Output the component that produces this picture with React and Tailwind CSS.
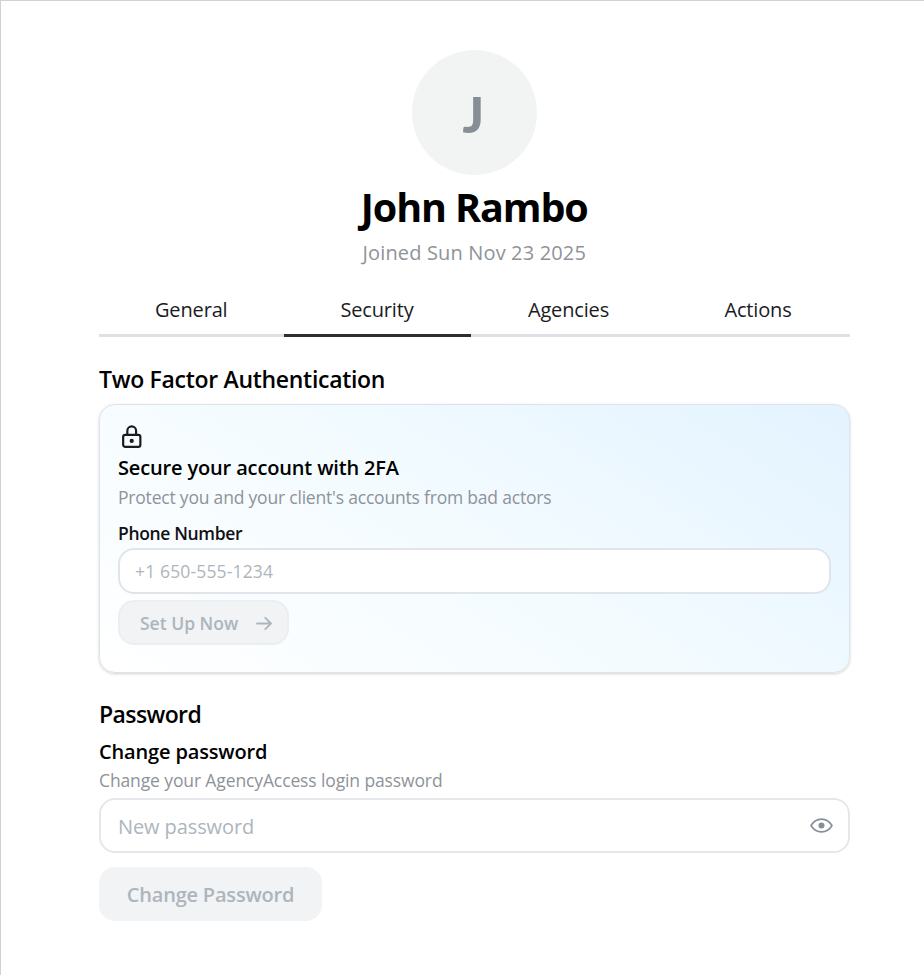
const tabs = ['General', 'Security', 'Agencies', 'Actions']

const LockIcon = () => (
  <svg className="ml-[1px] h-[25px] w-[25px]" viewBox="0 0 24 24" fill="none" stroke="currentColor" strokeWidth="2.1" strokeLinecap="round" strokeLinejoin="round">
    <rect x="4" y="10.5" width="16.5" height="11.5" rx="2" />
    <path d="M8 10.5V6.5a4.2 4.2 0 0 1 8.4 0v4" />
    <circle cx="12.2" cy="16.2" r="1" fill="currentColor" />
  </svg>
)

const ArrowIcon = () => (
  <svg className="h-[15px] w-[16px]" viewBox="0 0 16 15" fill="none" stroke="currentColor" strokeWidth="1.8" strokeLinecap="round" strokeLinejoin="round">
    <path d="M1 7.5h14M9.3 1.8L15 7.5l-5.7 5.7" />
  </svg>
)

const EyeIcon = () => (
  <svg className="h-[15px] w-[23px]" viewBox="0 0 23 15" fill="none">
    <path d="M1 7.5C3.5 3.3 7.2 1.1 11.5 1.1S19.5 3.3 22 7.5c-2.5 4.2-6.2 6.4-10.5 6.4S3.5 11.7 1 7.5z" stroke="#868e96" strokeWidth="1.6" strokeLinejoin="round" />
    <circle cx="11.5" cy="7.5" r="3" fill="#868e96" />
  </svg>
)

const ProfileHeader = () => (
  <div className="flex flex-col items-center whitespace-nowrap">
    <div className="flex h-[125px] w-[125px] items-center justify-center rounded-full bg-[#f2f4f4]">
      <span className="mt-[2px] mr-[2px] font-[Lato] text-[50px] leading-none font-black text-[#868e96]">J</span>
    </div>
    <h1 className="mt-[7px] text-[39.5px] leading-[50px] font-bold tracking-[-1.1px] text-black">John Rambo</h1>
    <p className="mt-[6px] text-[20px] leading-[30px] tracking-[0.15px] text-[#8e9399]">Joined Sun Nov 23 2025</p>
  </div>
)

const Tabs = () => (
  <div className="mt-[22px] grid grid-cols-[184.5px_187px_196px_183px] text-[20px] leading-[30px] tracking-[-0.15px]">
    {tabs.map((tab) => (
      <button
        key={tab}
        className={`h-[47px] border-b-[3px] pb-[5px] ${tab === 'Security' ? 'border-[#2e2e2e]' : 'border-[#dee0e6]'}`}
      >
        {tab}
      </button>
    ))}
  </div>
)

const TwoFactor = () => (
  <section className="mt-[27px]">
    <h2 className="text-[23px] leading-[30px] font-semibold tracking-[-0.3px] text-black">Two Factor Authentication</h2>
    <div className="mt-[10px] flex h-[269px] flex-col items-start rounded-[16px] border border-[#dfe4ea] bg-linear-[32deg] from-white via-[#f3fbff] to-[#e3f3ff] px-[18px] pt-[19px] shadow-[0_1px_3px_rgba(0,0,0,0.18)]">
      <LockIcon />
      <h3 className="mt-[4px] text-[20px] leading-[30px] font-semibold tracking-[-0.15px] text-black">Secure your account with 2FA</h3>
      <p className="text-[17.5px] leading-[28px] tracking-[-0.2px] text-[#8e9399]">Protect you and your client's accounts from bad actors</p>
      <label className="mt-[9px] text-[17.5px] leading-[26px] font-semibold tracking-[-0.35px] text-[#101113]">Phone Number</label>
      <input
        className="mt-[2px] h-[46px] w-full rounded-[16px] border-2 border-[#e1e4e9] bg-white px-[15px] text-[17.5px] tracking-[0.15px] placeholder:text-[#adb5bd]"
        placeholder="+1 650-555-1234"
      />
      <button className="mt-[6px] flex h-[45px] w-[171px] items-center rounded-[16px] border-2 border-[#eceef0] bg-[#f1f3f5] pt-[2px] pl-[20px] text-[17.5px] font-semibold text-[#adb5bd]">
        <span className="w-[116px] text-left">Set Up Now</span>
        <ArrowIcon />
      </button>
    </div>
  </section>
)

const Password = () => (
  <section className="mt-[26px]">
    <h2 className="text-[23px] leading-[30px] font-semibold tracking-[-0.6px] text-black">Password</h2>
    <h3 className="mt-[8px] text-[20px] leading-[30px] font-semibold tracking-[-0.15px] text-black">Change password</h3>
    <p className="text-[17.5px] leading-[27px] tracking-[-0.12px] text-[#8e9399]">Change your AgencyAccess login password</p>
    <div className="mt-[4px] flex h-[55px] items-center rounded-[16px] border-2 border-[#e5e7eb] bg-white pr-[15px] pl-[17px]">
      <input className="min-w-0 flex-1 pt-[2px] text-[20px] tracking-[-0.1px] placeholder:text-[#adb5bd]" placeholder="New password" />
      <EyeIcon />
    </div>
    <button className="mt-[14px] h-[54px] w-[223px] rounded-[16px] bg-[#f1f3f5] pt-[1px] text-[20px] font-semibold tracking-[-0.2px] text-[#adb5bd]">
      Change Password
    </button>
  </section>
)

export default function App() {
  return (
    <div className="h-[975px] overflow-hidden border-t border-l border-[#d2d2d2] bg-white pt-[49px] pl-[98px] font-['Open_Sans',sans-serif] text-[#1a1b1e]">
      <main className="w-[750.5px]">
        <ProfileHeader />
        <Tabs />
        <TwoFactor />
        <Password />
      </main>
    </div>
  )
}
